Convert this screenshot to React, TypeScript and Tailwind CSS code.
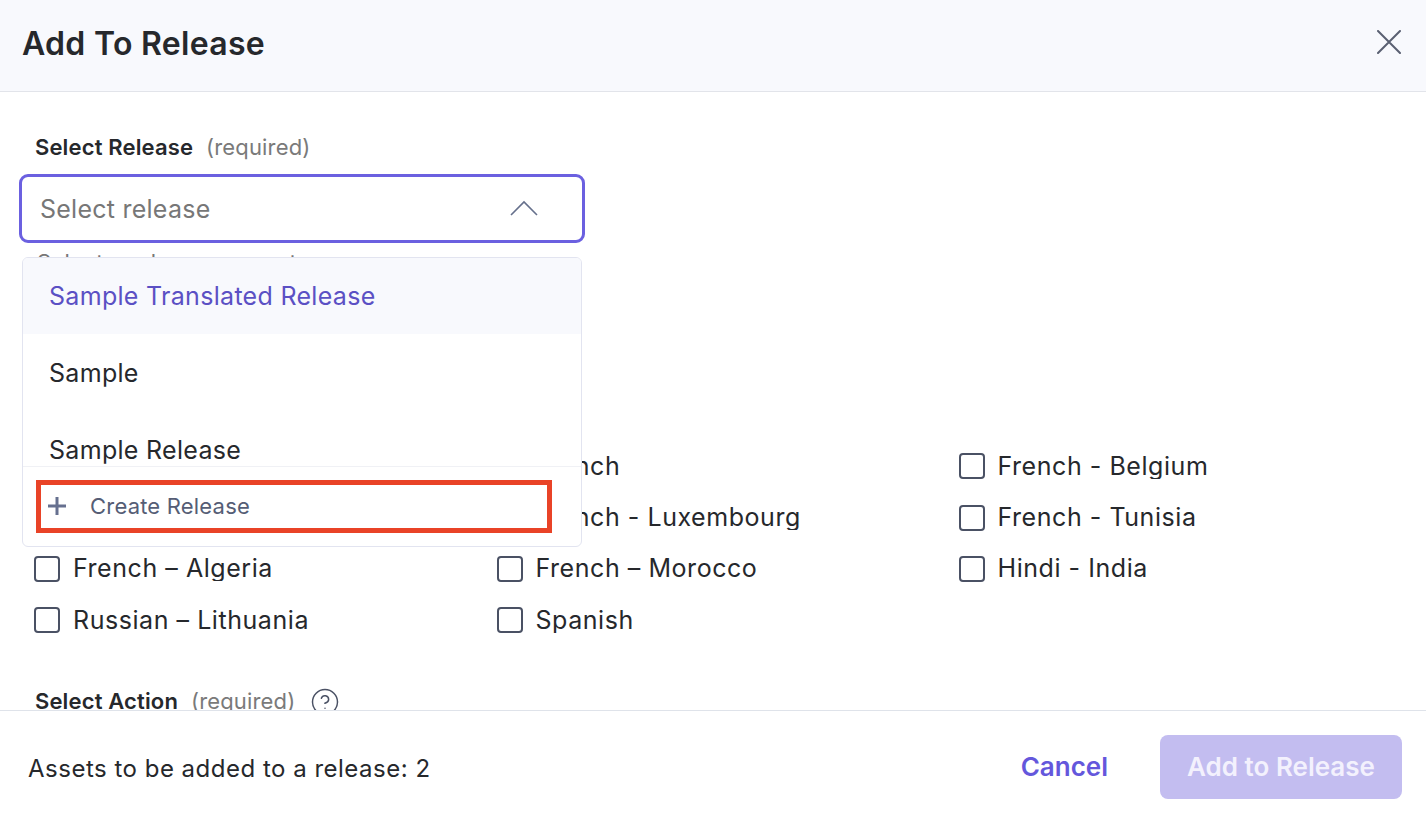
import { CircleHelp } from "lucide-react";

const languages = [
  "Arabic",
  "French",
  "French - Belgium",
  "French - Canada",
  "French - Luxembourg",
  "French - Tunisia",
  "French – Algeria",
  "French – Morocco",
  "Hindi - India",
  "Russian – Lithuania",
  "Spanish",
];

const LanguageOption = ({ label }: { label: string }) => (
  <label className="flex items-center h-[26px] -ml-[1px]">
    <span className="w-[26px] h-[26px] rounded-[4px] border-2 border-[#4a5164] bg-white shrink-0" />
    <span className="ml-[13px] h-[25px] overflow-hidden text-[25px] leading-[25px] tracking-[0.55px] text-[#26282c] whitespace-nowrap">
      {label}
    </span>
  </label>
);

const App = () => {
  return (
    <div className="w-[1426px] h-[820px] flex flex-col bg-white overflow-hidden font-['Inter',sans-serif]">
      <header className="h-[92px] shrink-0 flex items-center justify-between pl-[22px] pr-[25px] pb-[4px] bg-[#f8f9fd] border-b border-[#e2e4ea]">
        <h1 className="text-[32px] font-semibold tracking-[0.3px] text-[#26282c]">Add To Release</h1>
        <svg width="24" height="24" viewBox="0 0 24 24" className="-mt-[3px] text-[#5a6072]">
          <path d="M1 1 L23 23 M23 1 L1 23" stroke="currentColor" strokeWidth="2" strokeLinecap="round" />
        </svg>
      </header>

      <main className="relative flex-1 min-h-0 overflow-hidden pl-[35px] pt-[40px]">
        <div className="flex items-center h-[30px] text-[22px] tracking-[0.15px]">
          <span className="font-semibold text-[#26282c]">Select Release</span>
          <span className="ml-[13px] text-[#7a7a7a]">(required)</span>
        </div>
        <div className="-ml-[16px] mt-[12px] w-[566px] h-[69px] flex items-center justify-between pl-[18px] pr-[44px] border-[3px] border-[#6b60e0] rounded-[9px] bg-white">
          <span className="mt-[2px] text-[25px] tracking-[0.25px] text-[#777777]">Select release</span>
          <svg width="28" height="16" viewBox="0 0 28 16" className="-mt-[2px] text-[#66708c]">
            <path d="M1 15 L14 2 L27 15" fill="none" stroke="currentColor" strokeWidth="1.6" />
          </svg>
        </div>
        <p className="mt-[6px] ml-[2px] text-[22px] tracking-[0.3px] leading-[26px] text-[#777777]">Select a release or create one</p>

        <div className="mt-[178.4px] grid grid-cols-[462.5px_462px_1fr] gap-y-[25.3px]">
          {languages.map((l) => (
            <LanguageOption key={l} label={l} />
          ))}
        </div>

        <div className="mt-[53.5px] flex items-center h-[30px] text-[22px] tracking-[0.15px]">
          <span className="font-semibold text-[#26282c]">Select Action</span>
          <span className="ml-[13px] text-[#7a7a7a]">(required)</span>
          <CircleHelp size={30} strokeWidth={1.2} className="ml-[15px] text-[#4a5164]" />
        </div>

        <div className="absolute left-[22px] top-[165px] w-[560px] h-[290px] flex flex-col bg-white border border-[#e2e4f0] rounded-[6px] overflow-hidden">
          <div className="h-[208px] overflow-hidden text-[25px] tracking-[0.3px] text-[#26282c]">
            <div className="h-[76px] flex items-center pl-[26px] pt-[2px] bg-[#f8f9fd] text-[#5b50c4]">Sample Translated Release</div>
            <div className="h-[77px] flex items-center pl-[26px] pt-[2px]">Sample</div>
            <div className="h-[77px] flex items-center pl-[26px] pt-[2px]">Sample Release</div>
          </div>
          <div className="relative flex-1 border-t border-[#f0f1f5] flex items-center pl-[24px] pb-[1px]">
            <svg width="20" height="20" viewBox="0 0 20 20" className="text-[#66708f]">
              <path d="M10 1 V19 M1 10 H19" stroke="currentColor" strokeWidth="3" />
            </svg>
            <span className="ml-[23px] text-[22px] tracking-[0.2px] text-[#555d75]">Create Release</span>
            <div className="absolute left-[13px] top-[13px] w-[516px] h-[53px] border-[5px] border-[#e94327]" />
          </div>
        </div>
      </main>

      <footer className="h-[110px] shrink-0 flex items-center justify-between pl-[28px] pr-[24px] pt-[2px] border-t border-[#dfe3ea] bg-white">
        <span className="mt-[4px] text-[24px] tracking-[0.5px] text-[#26282c]">Assets to be added to a release: 2</span>
        <div className="flex items-center">
          <button className="text-[26px] font-semibold text-[#6457dc]">Cancel</button>
          <button className="ml-[52px] w-[242px] h-[64px] rounded-[8px] bg-[#c3bdf0] text-[26px] font-semibold text-[#f3f1fd]">
            Add to Release
          </button>
        </div>
      </footer>
    </div>
  );
};

export default App;
